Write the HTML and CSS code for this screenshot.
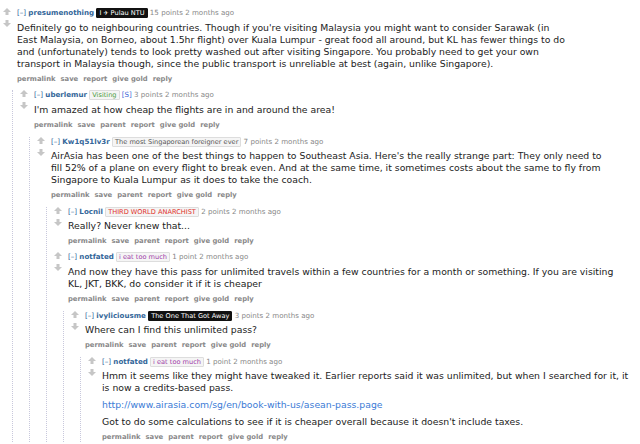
FILE: index.html
```html
<!DOCTYPE html>
<html>
<head>
<meta charset="utf-8">
<link rel="stylesheet" href="styles.css">
</head>
<body>
<div class="thread">
  <div class="comment">
    <div class="midcol">
      <svg class="arrow" viewBox="0 0 8 7"><path d="M0 4 L4 0 L8 4 L5.5 4 L5.5 7 L2.5 7 L2.5 4 Z"/></svg>
      <svg class="arrow down" viewBox="0 0 8 7"><path d="M0 3 L4 7 L8 3 L5.5 3 L5.5 0 L2.5 0 L2.5 3 Z"/></svg>
    </div>
    <div class="entry">
      <p class="tagline"><span class="expand">[–]</span> <span class="author">presumenothing</span> <span class="flair dark">I <span class="glyph">✈</span> Pulau NTU</span> <span class="score">15 points 2 months ago</span></p>
      <div class="md">
        <p>Definitely go to neighbouring countries. Though if you're visiting Malaysia you might want to consider Sarawak (in<br>East Malaysia, on Borneo, about 1.5hr flight) over Kuala Lumpur - great food all around, but KL has fewer things to do<br>and (unfortunately) tends to look pretty washed out after visiting Singapore. You probably need to get your own<br>transport in Malaysia though, since the public transport is unreliable at best (again, unlike Singapore).</p>
      </div>
      <ul class="buttons"><li>permalink</li><li>save</li><li>report</li><li>give gold</li><li>reply</li></ul>
    </div>
    <div class="child">
      <div class="comment">
        <div class="midcol">
          <svg class="arrow" viewBox="0 0 8 7"><path d="M0 4 L4 0 L8 4 L5.5 4 L5.5 7 L2.5 7 L2.5 4 Z"/></svg>
          <svg class="arrow down" viewBox="0 0 8 7"><path d="M0 3 L4 7 L8 3 L5.5 3 L5.5 0 L2.5 0 L2.5 3 Z"/></svg>
        </div>
        <div class="entry">
          <p class="tagline"><span class="expand">[–]</span> <span class="author">uberlemur</span> <span class="flair green">Visiting</span> <span class="submitter">[S]</span> <span class="score">3 points 2 months ago</span></p>
          <div class="md"><p>I'm amazed at how cheap the flights are in and around the area!</p></div>
          <ul class="buttons"><li>permalink</li><li>save</li><li>parent</li><li>report</li><li>give gold</li><li>reply</li></ul>
        </div>
        <div class="child">
          <div class="comment">
            <div class="midcol">
              <svg class="arrow" viewBox="0 0 8 7"><path d="M0 4 L4 0 L8 4 L5.5 4 L5.5 7 L2.5 7 L2.5 4 Z"/></svg>
              <svg class="arrow down" viewBox="0 0 8 7"><path d="M0 3 L4 7 L8 3 L5.5 3 L5.5 0 L2.5 0 L2.5 3 Z"/></svg>
            </div>
            <div class="entry">
              <p class="tagline"><span class="expand">[–]</span> <span class="author">Kw1q51lv3r</span> <span class="flair">The most Singaporean foreigner ever</span> <span class="score">7 points 2 months ago</span></p>
              <div class="md"><p>AirAsia has been one of the best things to happen to Southeast Asia. Here's the really strange part: They only need to<br>fill 52% of a plane on every flight to break even. And at the same time, it sometimes costs about the same to fly from<br>Singapore to Kuala Lumpur as it does to take the coach.</p></div>
              <ul class="buttons"><li>permalink</li><li>save</li><li>parent</li><li>report</li><li>give gold</li><li>reply</li></ul>
            </div>
            <div class="child">
              <div class="comment">
                <div class="midcol">
                  <svg class="arrow" viewBox="0 0 8 7"><path d="M0 4 L4 0 L8 4 L5.5 4 L5.5 7 L2.5 7 L2.5 4 Z"/></svg>
                  <svg class="arrow down" viewBox="0 0 8 7"><path d="M0 3 L4 7 L8 3 L5.5 3 L5.5 0 L2.5 0 L2.5 3 Z"/></svg>
                </div>
                <div class="entry">
                  <p class="tagline"><span class="expand">[–]</span> <span class="author">Locnil</span> <span class="flair red">THIRD WORLD ANARCHIST</span> <span class="score">2 points 2 months ago</span></p>
                  <div class="md"><p>Really? Never knew that...</p></div>
                  <ul class="buttons"><li>permalink</li><li>save</li><li>parent</li><li>report</li><li>give gold</li><li>reply</li></ul>
                </div>
              </div>
              <div class="comment">
                <div class="midcol">
                  <svg class="arrow" viewBox="0 0 8 7"><path d="M0 4 L4 0 L8 4 L5.5 4 L5.5 7 L2.5 7 L2.5 4 Z"/></svg>
                  <svg class="arrow down" viewBox="0 0 8 7"><path d="M0 3 L4 7 L8 3 L5.5 3 L5.5 0 L2.5 0 L2.5 3 Z"/></svg>
                </div>
                <div class="entry">
                  <p class="tagline"><span class="expand">[–]</span> <span class="author">notfated</span> <span class="flair purple">i eat too much</span> <span class="score">1 point 2 months ago</span></p>
                  <div class="md"><p>And now they have this pass for unlimited travels within a few countries for a month or something. If you are visiting<br>KL, JKT, BKK, do consider it if it is cheaper</p></div>
                  <ul class="buttons"><li>permalink</li><li>save</li><li>parent</li><li>report</li><li>give gold</li><li>reply</li></ul>
                </div>
                <div class="child">
                  <div class="comment">
                    <div class="midcol">
                      <svg class="arrow" viewBox="0 0 8 7"><path d="M0 4 L4 0 L8 4 L5.5 4 L5.5 7 L2.5 7 L2.5 4 Z"/></svg>
                      <svg class="arrow down" viewBox="0 0 8 7"><path d="M0 3 L4 7 L8 3 L5.5 3 L5.5 0 L2.5 0 L2.5 3 Z"/></svg>
                    </div>
                    <div class="entry">
                      <p class="tagline"><span class="expand">[–]</span> <span class="author">ivyliciousme</span> <span class="flair dark">The One That Got Away</span> <span class="score">3 points 2 months ago</span></p>
                      <div class="md"><p>Where can I find this unlimited pass?</p></div>
                      <ul class="buttons"><li>permalink</li><li>save</li><li>parent</li><li>report</li><li>give gold</li><li>reply</li></ul>
                    </div>
                    <div class="child">
                      <div class="comment">
                        <div class="midcol">
                          <svg class="arrow" viewBox="0 0 8 7"><path d="M0 4 L4 0 L8 4 L5.5 4 L5.5 7 L2.5 7 L2.5 4 Z"/></svg>
                          <svg class="arrow down" viewBox="0 0 8 7"><path d="M0 3 L4 7 L8 3 L5.5 3 L5.5 0 L2.5 0 L2.5 3 Z"/></svg>
                        </div>
                        <div class="entry">
                          <p class="tagline"><span class="expand">[–]</span> <span class="author">notfated</span> <span class="flair purple">i eat too much</span> <span class="score">1 point 2 months ago</span></p>
                          <div class="md">
                            <p>Hmm it seems like they might have tweaked it. Earlier reports said it was unlimited, but when I searched for it, it<br>is now a credits-based pass.</p>
                            <p><a href="#">http://www.airasia.com/sg/en/book-with-us/asean-pass.page</a></p>
                            <p>Got to do some calculations to see if it is cheaper overall because it doesn't include taxes.</p>
                          </div>
                          <ul class="buttons"><li>permalink</li><li>save</li><li>parent</li><li>report</li><li>give gold</li><li>reply</li></ul>
                        </div>
                      </div>
                    </div>
                  </div>
                </div>
              </div>
            </div>
          </div>
        </div>
      </div>
    </div>
  </div>
</div>
</body>
</html>
```

FILE: styles.css
```css
html, body {
  margin: 0;
  padding: 0;
  background: #fff;
}

body {
  font-family: "DejaVu Sans", Verdana, sans-serif;
  color: #222;
  overflow: hidden;
}

.thread {
  padding-top: 8px;
}

.comment {
  display: grid;
  grid-template-columns: 17px auto;
}

.child > .comment + .comment {
  margin-top: 6px;
}

.midcol {
  grid-column: 1;
  padding-left: 3px;
  display: flex;
  flex-direction: column;
}

.arrow {
  width: 8px;
  height: 7px;
  fill: #c6c6c6;
  margin-top: 0;
}

.arrow.down {
  margin-top: 5px;
}

.entry {
  grid-column: 2;
}

.child {
  grid-column: 1 / -1;
  margin-left: 12px;
  margin-top: 6.8px;
  border-left: 1px dotted #c8c8dc;
  padding-left: 4px;
}

.tagline {
  margin: 0;
  font-size: 7.1px;
  line-height: 10px;
  height: 10px;
  color: #888;
  white-space: nowrap;
}

.expand {
  color: #369;
}

.author {
  color: #369;
  font-weight: bold;
}

.flair {
  display: inline-block;
  font-size: 6.6px;
  line-height: 8px;
  padding: 0 2px;
  border: 1px solid #ddd;
  background: #f5f5f5;
  color: #545454;
  border-radius: 1px;
  vertical-align: middle;
}

.flair.dark {
  background: #111;
  border-color: #111;
  color: #fff;
}

.flair .glyph {
  font-size: 6px;
}

.flair.green { color: #4a9a3a; }
.flair.red { color: #e0302a; }
.flair.purple { color: #a03aa8; }

.submitter {
  color: #3a66d8;
}

.md {
  margin-top: 3.5px;
  font-size: 9.3px;
  line-height: 12px;
  white-space: nowrap;
}

.md p {
  margin: 0 0 5px;
}

.md p:last-child {
  margin-bottom: 0;
}

.md a {
  color: #3b7bd6;
  text-decoration: none;
}

.buttons {
  list-style: none;
  margin: 4px 0 0;
  padding: 0;
  display: flex;
  gap: 5px;
  font-size: 6.8px;
  line-height: 10px;
  font-weight: bold;
  color: #888;
}
```
